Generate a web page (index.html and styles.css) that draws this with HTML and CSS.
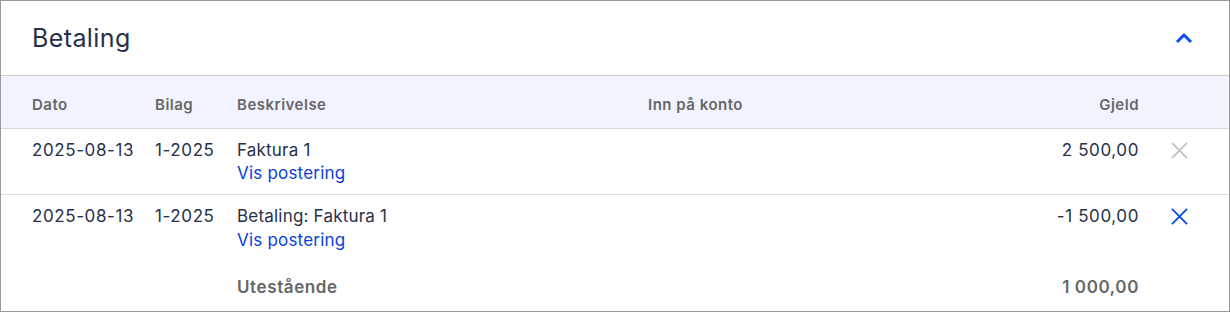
FILE: index.html
```html
<!DOCTYPE html>
<html lang="no">
<head>
<meta charset="utf-8">
<link rel="stylesheet" href="styles.css">
</head>
<body>
<section class="panel">
  <header class="panel-head">
    <h2 class="panel-title">Betaling</h2>
    <button class="toggle" aria-label="Skjul">
      <svg width="18" height="12" viewBox="0 0 18 12"><path d="M2 10 L9 3 L16 10" fill="none" stroke="#0b4cf2" stroke-width="3"/></svg>
    </button>
  </header>
  <table class="tbl">
    <thead>
      <tr>
        <th class="c-date">Dato</th>
        <th class="c-bilag">Bilag</th>
        <th class="c-desc">Beskrivelse</th>
        <th class="c-inn">Inn på konto</th>
        <th class="c-gjeld">Gjeld</th>
        <th class="c-act"></th>
      </tr>
    </thead>
    <tbody>
      <tr class="row row-first">
        <td class="c-date">2025-08-13</td>
        <td class="c-bilag">1-2025</td>
        <td class="c-desc txt">Faktura 1<br><a class="link" href="#">Vis postering</a></td>
        <td class="c-inn"></td>
        <td class="c-gjeld">2 500,00</td>
        <td class="c-act"><svg class="x" width="18" height="18" viewBox="0 0 18 18"><path d="M1 1 L17 17 M17 1 L1 17" stroke="#c4c4c4" stroke-width="2"/></svg></td>
      </tr>
      <tr class="row row-second">
        <td class="c-date">2025-08-13</td>
        <td class="c-bilag">1-2025</td>
        <td class="c-desc txt">Betaling: Faktura 1<br><a class="link" href="#">Vis postering</a></td>
        <td class="c-inn"></td>
        <td class="c-gjeld">-1 500,00</td>
        <td class="c-act"><svg class="x" width="18" height="18" viewBox="0 0 18 18"><path d="M1 1 L17 17 M17 1 L1 17" stroke="#0b4cf2" stroke-width="2"/></svg></td>
      </tr>
      <tr class="sum">
        <td></td>
        <td></td>
        <td class="c-desc">Utestående</td>
        <td></td>
        <td class="c-gjeld">1 000,00</td>
        <td></td>
      </tr>
    </tbody>
  </table>
</section>
</body>
</html>
```
FILE: styles.css
```css
* { box-sizing: border-box; }
html, body { margin: 0; padding: 0; background: #fff; }
body { font-family: "Inter", "Liberation Sans", sans-serif; color: #27304a; }
.panel {
  width: 1230px;
  height: 312px;
  border: 1px solid #9a9a9a;
  overflow: hidden;
}
.panel-head {
  height: 75px;
  display: flex;
  align-items: center;
  justify-content: space-between;
  padding: 0 35px 0 31px;
  border-bottom: 1px solid #cfcfd3;
}
.panel-title {
  margin: 0;
  font-size: 25px;
  font-weight: 400;
  color: #27304a;
  letter-spacing: 0.4px;
}
.toggle {
  background: none;
  border: 0;
  padding: 0;
  width: 20px;
  height: 20px;
  display: flex;
  align-items: center;
  justify-content: center;
}
.tbl {
  width: 100%;
  border-collapse: collapse;
  table-layout: fixed;
}
.tbl th {
  background: #f1f4fe;
  height: 52px;
  font-size: 15px;
  font-weight: 600;
  color: #676767;
  text-align: left;
  letter-spacing: 0.5px;
  border-bottom: 1px solid #d8d8dc;
  padding: 6px 0 0 0;
}
.tbl td { padding: 0; font-size: 17px; letter-spacing: 0.6px; vertical-align: top; }
.tbl td.txt { letter-spacing: 0.2px; }
.c-date { width: 154px; padding-left: 31px !important; }
.c-bilag { width: 82px; }
.c-desc { width: 411px; }
.c-inn { width: auto; }
.c-gjeld { width: 150px; text-align: right !important; }
.c-act { width: 90px; text-align: center !important; }
.row td { line-height: 23px; }
.row-first td { border-bottom: 1px solid #dcdcdc; padding-top: 10px; padding-bottom: 9px; }
.row-second td { padding-top: 9px; padding-bottom: 10px; line-height: 24px; }
.link { color: #0a3fd8; text-decoration: none; }
.x { display: block; margin: 3px auto 0 32px; width: 17px; height: 17px; }
.row-second .x { margin-top: 4px; }
.sum td { font-weight: 600; color: #676767; padding-top: 14px; line-height: 23px; }
```
